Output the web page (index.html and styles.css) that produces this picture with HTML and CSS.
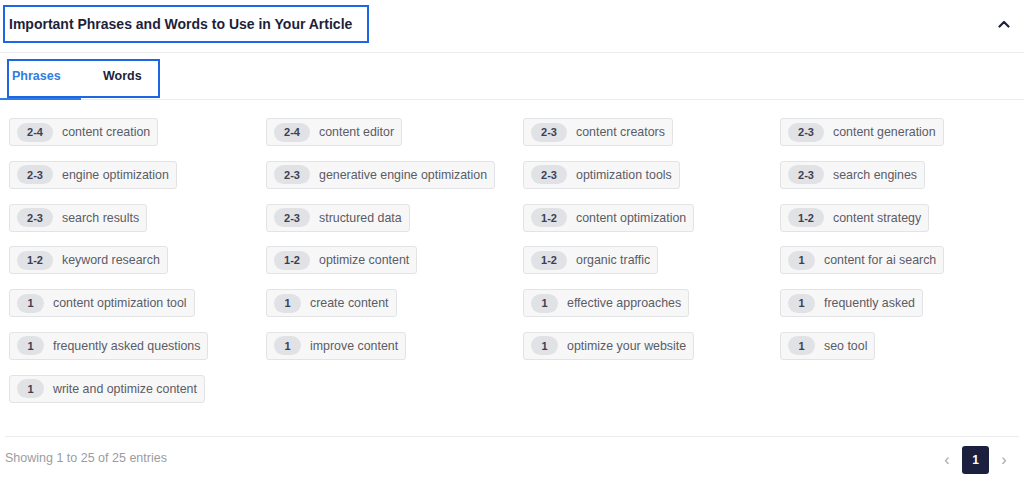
FILE: index.html
```html
<!DOCTYPE html>
<html>
<head>
<meta charset="utf-8">
<link rel="stylesheet" href="styles.css">
</head>
<body>
<div class="panel">
  <div class="header">
    <div class="title-box"><h2 class="title">Important Phrases and Words to Use in Your Article</h2></div>
    <svg class="chevron" width="12" height="8" viewBox="0 0 12 8"><path d="M1.5 6.5 L6 2 L10.5 6.5" fill="none" stroke="#1f2240" stroke-width="2.2" stroke-linecap="round" stroke-linejoin="round"/></svg>
  </div>
  <div class="tabs">
    <div class="tab-box">
      <span class="tab active">Phrases</span>
      <span class="tab">Words</span>
    </div>
    <div class="tab-underline"></div>
  </div>
  <div class="grid">
    <div class="cell"><span class="chip"><span class="badge">2-4</span><span class="label">content creation</span></span></div>
    <div class="cell"><span class="chip"><span class="badge">2-4</span><span class="label">content editor</span></span></div>
    <div class="cell"><span class="chip"><span class="badge">2-3</span><span class="label">content creators</span></span></div>
    <div class="cell"><span class="chip"><span class="badge">2-3</span><span class="label">content generation</span></span></div>

    <div class="cell"><span class="chip"><span class="badge">2-3</span><span class="label">engine optimization</span></span></div>
    <div class="cell"><span class="chip"><span class="badge">2-3</span><span class="label">generative engine optimization</span></span></div>
    <div class="cell"><span class="chip"><span class="badge">2-3</span><span class="label">optimization tools</span></span></div>
    <div class="cell"><span class="chip"><span class="badge">2-3</span><span class="label">search engines</span></span></div>

    <div class="cell"><span class="chip"><span class="badge">2-3</span><span class="label">search results</span></span></div>
    <div class="cell"><span class="chip"><span class="badge">2-3</span><span class="label">structured data</span></span></div>
    <div class="cell"><span class="chip"><span class="badge">1-2</span><span class="label">content optimization</span></span></div>
    <div class="cell"><span class="chip"><span class="badge">1-2</span><span class="label">content strategy</span></span></div>

    <div class="cell"><span class="chip"><span class="badge">1-2</span><span class="label">keyword research</span></span></div>
    <div class="cell"><span class="chip"><span class="badge">1-2</span><span class="label">optimize content</span></span></div>
    <div class="cell"><span class="chip"><span class="badge">1-2</span><span class="label">organic traffic</span></span></div>
    <div class="cell"><span class="chip"><span class="badge small">1</span><span class="label">content for ai search</span></span></div>

    <div class="cell"><span class="chip"><span class="badge small">1</span><span class="label">content optimization tool</span></span></div>
    <div class="cell"><span class="chip"><span class="badge small">1</span><span class="label">create content</span></span></div>
    <div class="cell"><span class="chip"><span class="badge small">1</span><span class="label">effective approaches</span></span></div>
    <div class="cell"><span class="chip"><span class="badge small">1</span><span class="label">frequently asked</span></span></div>

    <div class="cell"><span class="chip"><span class="badge small">1</span><span class="label">frequently asked questions</span></span></div>
    <div class="cell"><span class="chip"><span class="badge small">1</span><span class="label">improve content</span></span></div>
    <div class="cell"><span class="chip"><span class="badge small">1</span><span class="label">optimize your website</span></span></div>
    <div class="cell"><span class="chip"><span class="badge small">1</span><span class="label">seo tool</span></span></div>

    <div class="cell"><span class="chip"><span class="badge small">1</span><span class="label">write and optimize content</span></span></div>
  </div>
  <div class="footer">
    <span class="info">Showing 1 to 25 of 25 entries</span>
    <div class="pager">
      <span class="arrow">&#8249;</span>
      <span class="page">1</span>
      <span class="arrow">&#8250;</span>
    </div>
  </div>
</div>
</body>
</html>
```
FILE: styles.css
```css
* { box-sizing: border-box; }
html, body { margin: 0; padding: 0; background: #fff; }
body { font-family: "Liberation Sans", Arial, sans-serif; color: #1f2240; width: 1024px; height: 477px; overflow: hidden; }

.header {
  height: 53px;
  display: flex;
  align-items: flex-start;
  justify-content: space-between;
  border-bottom: 1px solid #ececef;
  padding: 5px 14px 0 3px;
}
.title-box {
  border: 2px solid #1f66e5;
  height: 38px;
  width: 366px;
  display: flex;
  align-items: center;
  padding-left: 4px;
}
.title {
  margin: 0;
  font-size: 14px;
  font-weight: bold;
  color: #1e1f3b;
  letter-spacing: 0;
}
.chevron { margin-top: 15px; }

.tabs {
  position: relative;
  height: 47px;
  border-bottom: 1px solid #ececef;
  padding: 6px 0 0 7px;
}
.tab-box {
  border: 2px solid #1f66e5;
  width: 153px;
  height: 39px;
  display: flex;
  align-items: center;
  padding-left: 3px;
  padding-bottom: 6px;
}
.tab {
  font-size: 12.5px;
  font-weight: bold;
  color: #1e1f3b;
}
.tab.active { color: #2f7de1; width: 91px; }
.tab-underline {
  position: absolute;
  left: 0;
  bottom: -1px;
  width: 81px;
  height: 2px;
  background: #2f7de1;
}

.grid {
  display: grid;
  grid-template-columns: repeat(4, 244px);
  column-gap: 13px;
  row-gap: 14.8px;
  padding: 18px 0 0 9px;
  height: 336px;
  align-content: start;
}
.cell { display: flex; }
.chip {
  display: inline-flex;
  align-items: center;
  height: 28px;
  border: 1px solid #e2e3e6;
  border-radius: 3px;
  background: #f7f7f8;
  padding: 0 7px 0 7px;
}
.badge {
  display: inline-flex;
  align-items: center;
  justify-content: center;
  width: 36px;
  height: 19px;
  border-radius: 10px;
  background: #e1e2e6;
  font-size: 11px;
  font-weight: bold;
  color: #3c3f52;
  margin-right: 9px;
}
.badge.small { width: 27px; }
.label {
  font-size: 12.4px;
  color: #5a5c66;
}

.footer {
  margin: 0 5px 0 5px;
  border-top: 1px solid #ececef;
  height: 46px;
  display: flex;
  align-items: center;
  justify-content: space-between;
}
.info {
  font-size: 12.5px;
  color: #9b9ca3;
  margin-top: -3px;
}
.pager {
  display: flex;
  align-items: center;
}
.arrow {
  font-size: 16px;
  color: #a6a8b0;
  width: 30px;
  text-align: center;
  line-height: 28px;
}
.page {
  width: 27px;
  height: 28px;
  border-radius: 3px;
  background: #1c1f3e;
  color: #fff;
  font-size: 12px;
  font-weight: bold;
  display: flex;
  align-items: center;
  justify-content: center;
}
```
